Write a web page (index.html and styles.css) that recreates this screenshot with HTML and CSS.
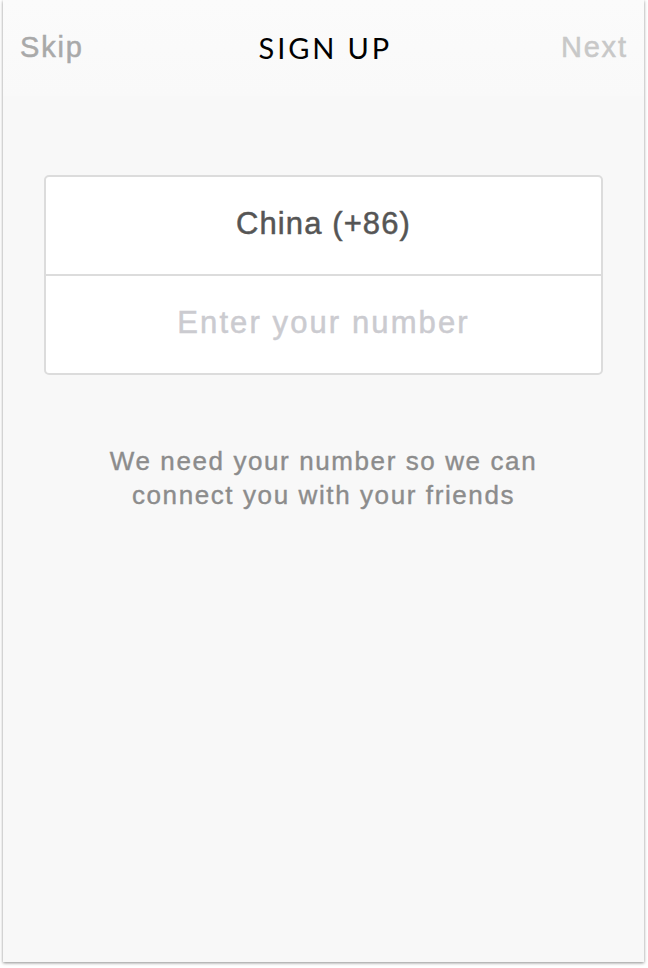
FILE: index.html
```html
<!DOCTYPE html>
<html>
<head>
<meta charset="utf-8">
<link rel="stylesheet" href="styles.css">
</head>
<body>
<div class="screen">
  <header class="nav">
    <span class="nav-btn skip">Skip</span>
    <span class="nav-title">SIGN UP</span>
    <span class="nav-btn next">Next</span>
  </header>
  <div class="card">
    <div class="row country">China (+86)</div>
    <div class="row phone">Enter your number</div>
  </div>
  <p class="note">We need your number so we can<br>connect you with your friends</p>
</div>
</body>
</html>
```
FILE: styles.css
```css
html, body {
  margin: 0;
  padding: 0;
  background: #ffffff;
}
body {
  width: 648px;
  height: 968px;
  overflow: hidden;
  font-family: "Liberation Sans", Arial, sans-serif;
}
.screen {
  margin-left: 3px;
  width: 641px;
  height: 962px;
  background: #f8f8f8;
  box-shadow: 0 1px 3px rgba(0,0,0,0.45);
  display: flex;
  flex-direction: column;
  align-items: center;
}
.nav {
  width: 100%;
  box-sizing: border-box;
  height: 96px;
  padding: 0 18px 2px 17px;
  display: flex;
  align-items: center;
  justify-content: space-between;
  background: linear-gradient(#fbfbfb, #f9f9f9);
}
.nav-btn {
  font-size: 29px;
  width: 100px;
  letter-spacing: 1.8px;
  -webkit-text-stroke: 0.5px currentColor;
}
.skip { color: #a9a9a9; }
.next { color: #c8c8c8; text-align: right; margin-right: -1.8px; }
.nav-title {
  font-family: Lato, "Open Sans", sans-serif;
  font-size: 29px;
  letter-spacing: 2.9px;
  margin-right: -2.9px;
  color: #000;
}
.card {
  margin-top: 79px;
  width: 559px;
  box-sizing: border-box;
  border: 2px solid #dcdcdc;
  border-radius: 5px;
  background: #fff;
}
.row {
  height: 97px;
  display: flex;
  align-items: center;
  justify-content: center;
  font-size: 31px;
  padding-bottom: 4px;
  box-sizing: border-box;
  -webkit-text-stroke: 0.5px currentColor;
}
.country {
  height: 99px;
  color: #555555;
  letter-spacing: 1.1px;
  border-bottom: 2px solid #dcdcdc;
}
.phone {
  color: #cbcbd0;
  letter-spacing: 2.1px;
}
.note {
  margin: 69px 0 0;
  text-align: center;
  font-size: 26px;
  line-height: 34px;
  letter-spacing: 1.6px;
  color: #8c8c8c;
  -webkit-text-stroke: 0.4px currentColor;
}
```
